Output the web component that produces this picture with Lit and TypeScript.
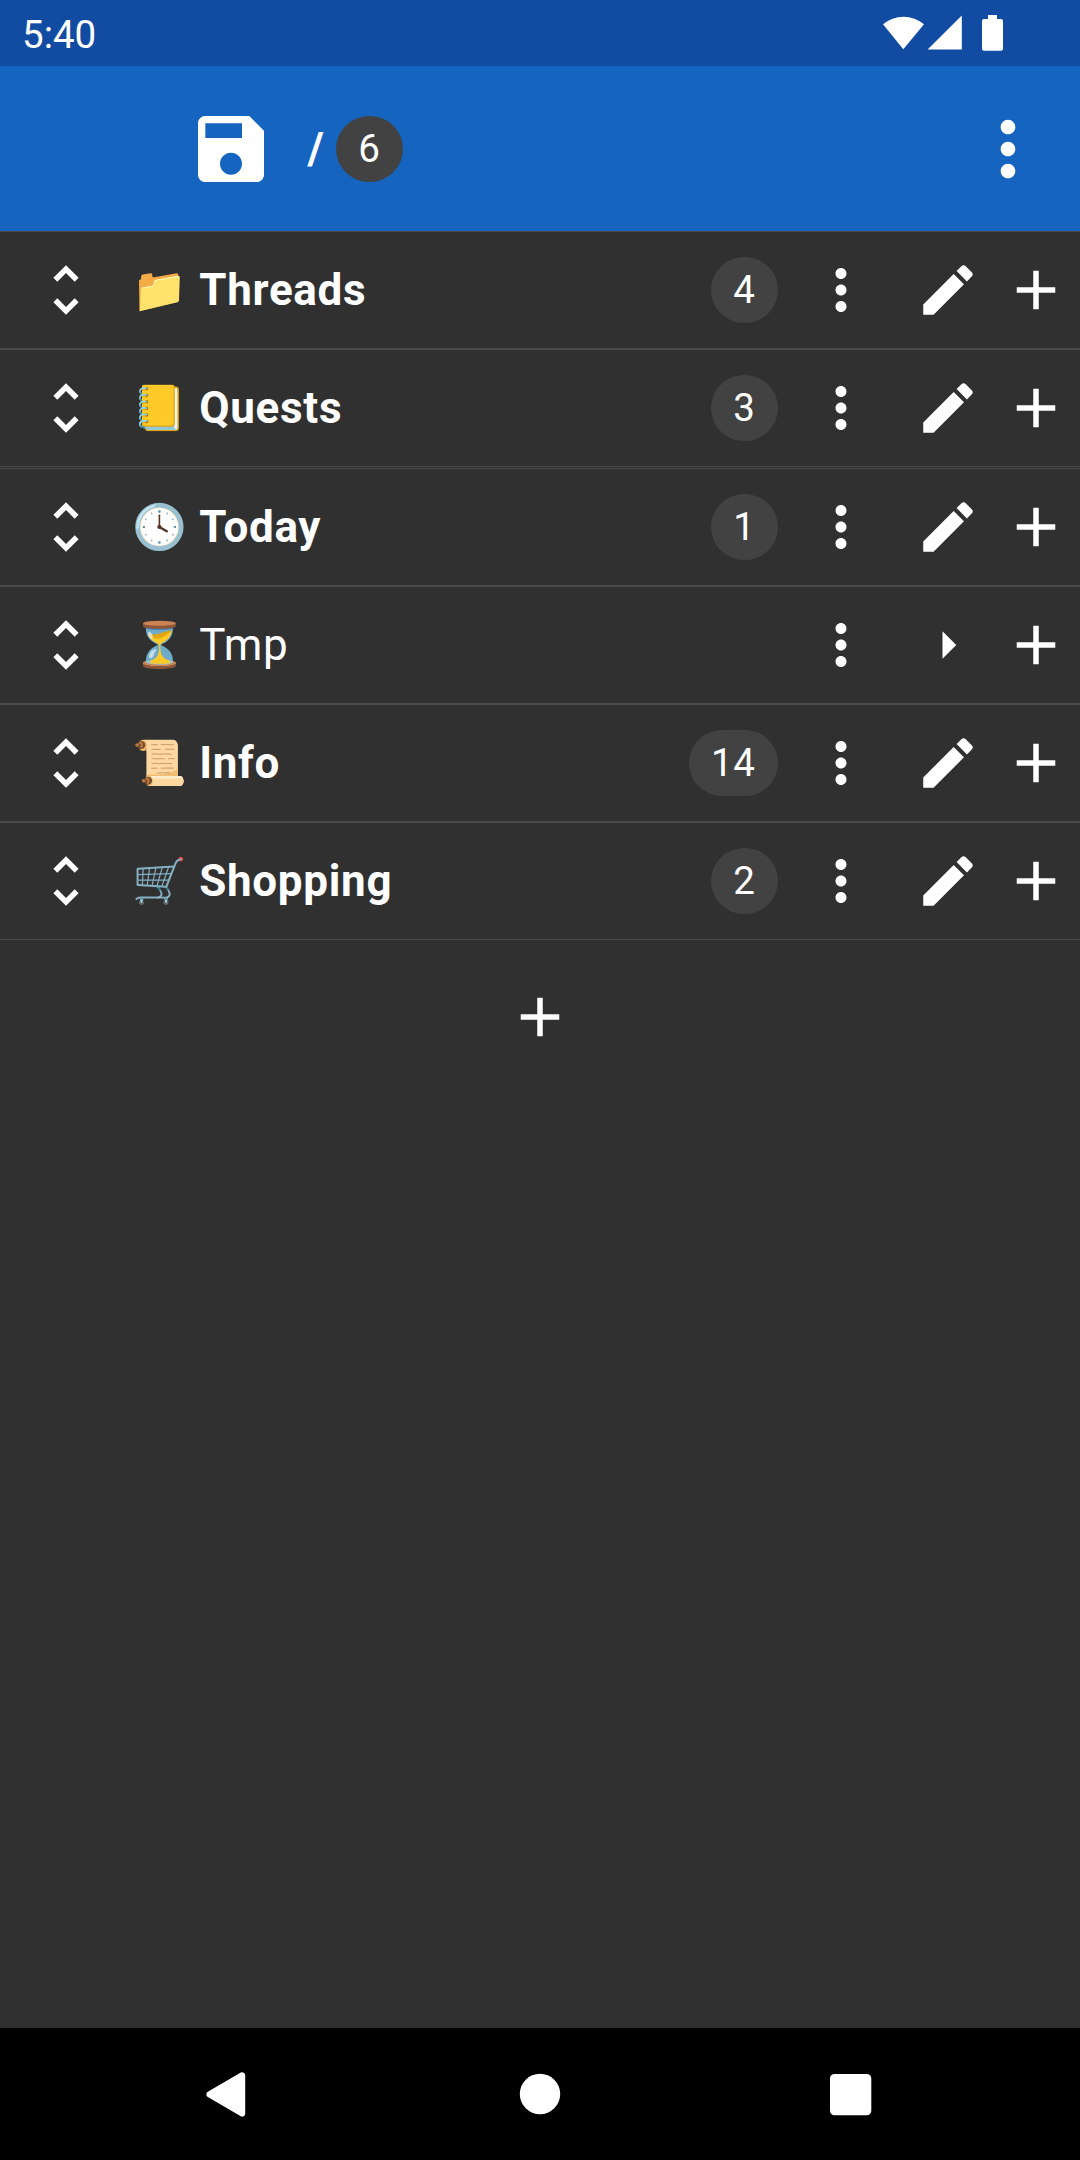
import { LitElement, html, css, svg } from "lit";
import { customElement } from "lit/decorators.js";

interface Item {
  emoji: string;
  name: string;
  count?: number;
}

const ITEMS: Item[] = [
  { emoji: "📁", name: "Threads", count: 4 },
  { emoji: "📒", name: "Quests", count: 3 },
  { emoji: "🕓", name: "Today", count: 1 },
  { emoji: "⏳", name: "Tmp" },
  { emoji: "📜", name: "Info", count: 14 },
  { emoji: "🛒", name: "Shopping", count: 2 },
];

const ICONS = {
  save: "M17 3H5c-1.11 0-2 .9-2 2v14c0 1.1.89 2 2 2h14c1.1 0 2-.9 2-2V7l-4-4zm-5 16c-1.66 0-3-1.34-3-3s1.34-3 3-3 3 1.34 3 3-1.34 3-3 3zm3-10H5V5h10v4z",
  more: "M12 8c1.1 0 2-.9 2-2s-.9-2-2-2-2 .9-2 2 .9 2 2 2zm0 2c-1.1 0-2 .9-2 2s.9 2 2 2 2-.9 2-2-.9-2-2-2zm0 6c-1.1 0-2 .9-2 2s.9 2 2 2 2-.9 2-2-.9-2-2-2z",
  unfold: "M12 5.83L15.17 9l1.41-1.41L12 3 7.41 7.59 8.83 9 12 5.83zm0 12.34L8.83 15l-1.41 1.41L12 21l4.59-4.59L15.17 15 12 18.17z",
  edit: "M3 17.25V21h3.75L17.81 9.94l-3.75-3.75L3 17.25zM20.71 7.04c.39-.39.39-1.02 0-1.41l-2.34-2.34c-.39-.39-1.02-.39-1.41 0l-1.83 1.83 3.75 3.75 1.83-1.83z",
  add: "M19 13h-6v6h-2v-6H5v-2h6V5h2v6h6v2z",
  right: "M10 17l5-5-5-5v10z",
};

const icon = (name: keyof typeof ICONS, cls = "") =>
  html`<svg class="icon ${cls}" viewBox="0 0 24 24">${svg`<path d=${ICONS[name]}></path>`}</svg>`;

@customElement("app-root")
export class AppRoot extends LitElement {
  static styles = css`
    :host {
      display: flex;
      flex-direction: column;
      width: 1080px;
      height: 2160px;
      background: #303030;
      color: #fff;
      font-family: Roboto, "Noto Color Emoji", sans-serif;
      overflow: hidden;
    }
    svg {
      display: block;
      fill: #fff;
      flex: none;
    }
    .status {
      height: 66px;
      flex: none;
      background: #124ca2;
      display: flex;
      align-items: center;
      justify-content: space-between;
      padding-left: 22px;
    }
    .time {
      font-size: 38.5px;
      line-height: 66px;
      padding-top: 3px;
    }
    .bar {
      box-sizing: border-box;
      height: 165px;
      flex: none;
      background: #1564c0;
      display: flex;
      align-items: center;
      padding: 0 27.8px 0 187px;
    }
    .icon {
      width: 66px;
      height: 66px;
    }
    .large {
      width: 88px;
      height: 88px;
    }
    .slash {
      font-size: 44px;
      font-weight: 700;
      margin-left: 32.5px;
      width: 28.5px;
    }
    .badge {
      box-sizing: border-box;
      min-width: 66.6px;
      height: 66px;
      padding: 0 22px;
      border-radius: 33px;
      background: #424242;
      font-size: 38.5px;
      letter-spacing: 0.7px;
      line-height: 66px;
      text-align: center;
      flex: none;
    }
    .spacer {
      flex: 1;
    }
    .row {
      box-sizing: border-box;
      height: 118px;
      flex: none;
      display: flex;
      align-items: center;
      border-top: 1px solid #4a4a4a;
      border-bottom: 1px solid #4a4a4a;
      padding: 0 11px 0 33px;
    }
    .row:nth-of-type(5) {
      margin-top: 1px;
    }
    .emoji {
      width: 55px;
      margin-left: 33px;
      font-size: 44px;
      line-height: 60px;
      display: flex;
      justify-content: center;
    }
    .label {
      flex: 1;
      margin-left: 12.2px;
      font-size: 44px;
      line-height: 60px;
      letter-spacing: 0.7px;
      font-weight: 400;
    }
    .label.bold {
      font-weight: 700;
    }
    .dots {
      margin: 0 41.4px 0 30px;
    }
    .plus {
      margin-left: 22px;
    }
    .addrow {
      height: 154px;
      flex: none;
      display: flex;
      align-items: center;
      justify-content: center;
    }
    .nav {
      height: 132px;
      flex: none;
      background: #000;
    }
  `;

  render() {
    return html`
      <div class="status">
        <span class="time">5:40</span>
        <svg width="197" height="66" viewBox="883 0 197 66">
          <path d="M903.3 49.3 883 24.3a32 32 0 0 1 41 0z"></path>
          <path d="M961.8 15.6V49.6H927.6z"></path>
          <path d="M988 15h9v4h4a2 2 0 0 1 2 2v27.7a2 2 0 0 1-2 2h-17a2 2 0 0 1-2-2V21a2 2 0 0 1 2-2h4z"></path>
        </svg>
      </div>
      <div class="bar">
        ${icon("save", "large")}
        <span class="slash">/</span>
        <span class="badge">6</span>
        <span class="spacer"></span>
        ${icon("more", "large")}
      </div>
      ${ITEMS.map(
        (it) => html`<div class="row">
          ${icon("unfold")}
          <span class="emoji">${it.emoji}</span>
          <span class="label ${it.count ? "bold" : ""}">${it.name}</span>
          ${it.count ? html`<span class="badge">${it.count}</span>` : ""}
          ${icon("more", "dots")}
          ${icon(it.count ? "edit" : "right")}
          ${icon("add", "plus")}
        </div>`
      )}
      <div class="addrow">${icon("add")}</div>
      <div class="spacer"></div>
      <div class="nav">
        <svg width="1080" height="132" viewBox="0 2028 1080 132">
          <path d="M240.800 2072.600a3 3 0 0 1 4.400 2.600V2113.700a3 3 0 0 1-4.400 2.600L207.800 2097a3 3 0 0 1 0-5.200z"></path>
          <circle cx="540" cy="2094" r="20.200"></circle>
          <rect x="830" y="2074" width="41.300" height="41.300" rx="4.500"></rect>
        </svg>
      </div>
    `;
  }
}
